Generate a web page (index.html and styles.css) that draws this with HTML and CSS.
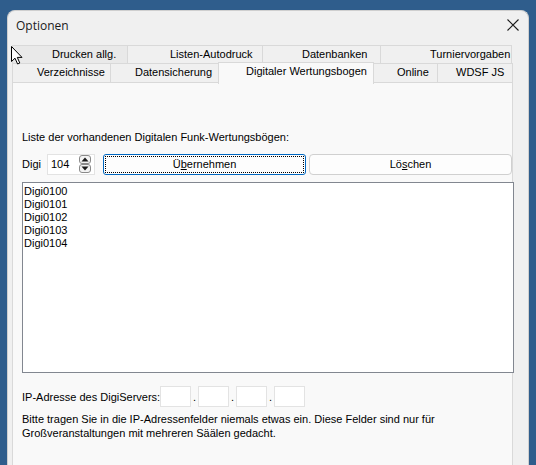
FILE: index.html
```html
<!DOCTYPE html>
<html>
<head>
<meta charset="utf-8">
<link rel="stylesheet" href="styles.css">
</head>
<body>
<div class="window">
  <div class="titlebar">
    <span class="title">Optionen</span>
    <svg class="close" width="12" height="12" viewBox="0 0 12 12"><path d="M0.5 0.5 L11.5 11.5 M11.5 0.5 L0.5 11.5" stroke="#1a1a1a" stroke-width="1.1" fill="none"/></svg>
  </div>
  <div class="tabs">
    <div class="tabrow row1">
      <div class="tab t-drucken">Drucken allg.</div>
      <div class="tab t-listen">Listen-Autodruck</div>
      <div class="tab t-daten">Datenbanken</div>
      <div class="tab t-turnier">Turniervorgaben</div>
    </div>
    <div class="tabrow row2">
      <div class="tab t-verz">Verzeichnisse</div>
      <div class="tab t-sich">Datensicherung</div>
      <div class="tab t-digi active">Digitaler Wertungsbogen</div>
      <div class="tab t-online">Online</div>
      <div class="tab t-wdsf">WDSF JS</div>
    </div>
  </div>
  <div class="panel">
    <div class="label-list">Liste der vorhandenen Digitalen Funk-Wertungsbögen:</div>
    <div class="controls">
      <span class="digi-label">Digi</span>
      <div class="spinedit">
        <span class="spinvalue">104</span>
        <div class="spinner">
          <svg width="12" height="18" viewBox="0 0 12 18">
            <rect x="0.5" y="0.5" width="11" height="8" rx="2.5" fill="#f3f3f3" stroke="#8a8a8a"/>
            <rect x="0.5" y="9.5" width="11" height="8" rx="2.5" fill="#f3f3f3" stroke="#8a8a8a"/>
            <path d="M2.5 6.5 L6 2.5 L9.5 6.5 Z" fill="#1a1a1a"/>
            <path d="M2.5 11.5 L6 15.5 L9.5 11.5 Z" fill="#1a1a1a"/>
          </svg>
        </div>
      </div>
      <button class="btn btn-default"><span class="focus">Ü<u>b</u>ernehmen</span></button>
      <button class="btn btn-last">Lö<u>s</u>chen</button>
    </div>
    <div class="listbox">
      <div class="item">Digi0100</div>
      <div class="item">Digi0101</div>
      <div class="item">Digi0102</div>
      <div class="item">Digi0103</div>
      <div class="item">Digi0104</div>
    </div>
    <div class="iprow">
      <span class="ip-label">IP-Adresse des DigiServers:</span>
      <div class="ipbox"></div><span class="dot">.</span>
      <div class="ipbox"></div><span class="dot">.</span>
      <div class="ipbox"></div><span class="dot">.</span>
      <div class="ipbox"></div>
    </div>
    <p class="note">Bitte tragen Sie in die IP-Adressenfelder niemals etwas ein. Diese Felder sind nur für<br>Großveranstaltungen mit mehreren Säälen gedacht.</p>
  </div>
  <svg class="cursor" width="12" height="19" viewBox="0 0 12 19">
    <path d="M0.5 0.5 L0.5 15.5 L4 12.2 L6.6 18 L8.8 17 L6.3 11.4 L11 11.4 Z" fill="#ffffff" stroke="#000000" stroke-width="1" stroke-linejoin="round"/>
  </svg>
</div>
</body>
</html>
```
FILE: styles.css
```css
html, body {
  margin: 0;
  padding: 0;
}
body {
  background: #2f5d8c;
  width: 536px;
  height: 465px;
  overflow: hidden;
  font-family: "Liberation Sans", Arial, sans-serif;
  font-size: 11px;
  color: #000;
}
.window {
  position: relative;
  margin: 10px 0 0 7px;
  width: 520px;
  height: 460px;
  background: #f0f0f0;
  border: 1px solid #cfcfcf;
  border-bottom: none;
  border-radius: 8px 8px 0 0;
}
.titlebar {
  height: 30px;
  display: flex;
  align-items: center;
  justify-content: space-between;
  padding: 0 9px 0 8px;
}
.title {
  font-family: "Open Sans", "Noto Sans", sans-serif;
  font-size: 12px;
  color: #1a1a1a;
  margin-top: -2px;
}
.close {
  margin-top: -2px;
}
.tabs {
  position: relative;
  height: 38px;
  margin-top: 4px;
}
.tabrow {
  display: flex;
  margin-left: 4px;
}
.tab {
  box-sizing: border-box;
  height: 19px;
  line-height: 17px;
  border: 1px solid #d9d9d9;
  border-bottom: none;
  margin-right: -1px;
  background: #f0f0f0;
  color: #000;
  white-space: nowrap;
}
.t-drucken { width: 116px; padding-left: 39px; background: #e9e9e9; }
.t-listen { width: 136px; padding-left: 42px; }
.t-daten { width: 119px; padding-left: 39px; }
.t-turnier { width: 132px; padding-left: 49px; }
.row2 { margin-top: -1px; height: 19px; align-items: flex-end; }
.t-verz { width: 99px; padding-left: 24px; }
.t-sich { width: 109px; padding-left: 24px; }
.t-digi { width: 156px; padding-left: 27px; }
.t-online { width: 65px; padding-left: 23px; }
.t-wdsf { width: 76px; padding-left: 18px; }
.tab.active {
  background: #f9f9f9;
  height: 22px;
  margin-bottom: -2px;
  line-height: 16px;
  position: relative;
  z-index: 2;
}
.panel {
  box-sizing: border-box;
  margin: -1px 0 0 4px;
  width: 501px;
  height: 390px;
  background: #f9f9f9;
  border: 1px solid #d9d9d9;
  border-bottom: none;
  padding: 0 0 0 9px;
  display: flex;
  flex-direction: column;
}
.label-list {
  margin-top: 48px;
  line-height: 13px;
}
.controls {
  display: flex;
  align-items: center;
  margin-top: 9px;
  height: 22px;
}
.digi-label {
  width: 25px;
  flex-shrink: 0;
}
.spinedit {
  box-sizing: border-box;
  flex-shrink: 0;
  width: 48px;
  height: 21px;
  background: #fff;
  border: 1px solid #e3e3e3;
  display: flex;
  align-items: center;
  padding-left: 3px;
  margin-right: 8px;
}
.spinvalue {
  width: 28px;
}
.spinner {
  display: flex;
  height: 18px;
}
.btn {
  box-sizing: border-box;
  flex-shrink: 0;
  font-family: inherit;
  font-size: 11px;
  color: #000;
  height: 21px;
  width: 203px;
  background: #fdfdfd;
  border: 1px solid #d0d0d0;
  border-radius: 4px;
  padding: 0;
  margin: 0 3px 0 0;
}
.btn-last {
  margin-right: 0;
}
.btn-default {
  border: 1px solid #0067c0;
  border-radius: 3px;
  padding: 1px;
}
.focus {
  box-sizing: border-box;
  display: flex;
  align-items: center;
  justify-content: center;
  width: 100%;
  height: 100%;
  border: 1px dotted #000;
}
.listbox {
  box-sizing: border-box;
  margin-top: 7px;
  width: 492px;
  height: 191px;
  flex-shrink: 0;
  background: #fff;
  border: 1px solid #828790;
  padding: 2px 0 0 1px;
}
.item {
  font-family: "Liberation Sans", Arial, sans-serif;
  font-size: 11px;
  line-height: 13px;
}
.iprow {
  display: flex;
  align-items: center;
  margin-top: 13px;
  height: 21px;
}
.ip-label {
  width: 138px;
  flex-shrink: 0;
  white-space: nowrap;
}
.ipbox {
  box-sizing: border-box;
  flex-shrink: 0;
  width: 31px;
  height: 21px;
  background: #fff;
  border: 1px solid #e3e3e3;
}
.dot {
  width: 7px;
  text-align: center;
}
.note {
  margin: 5px 0 0 0;
  line-height: 14px;
}
.cursor {
  position: absolute;
  left: 3px;
  top: 35px;
  z-index: 5;
}
```
